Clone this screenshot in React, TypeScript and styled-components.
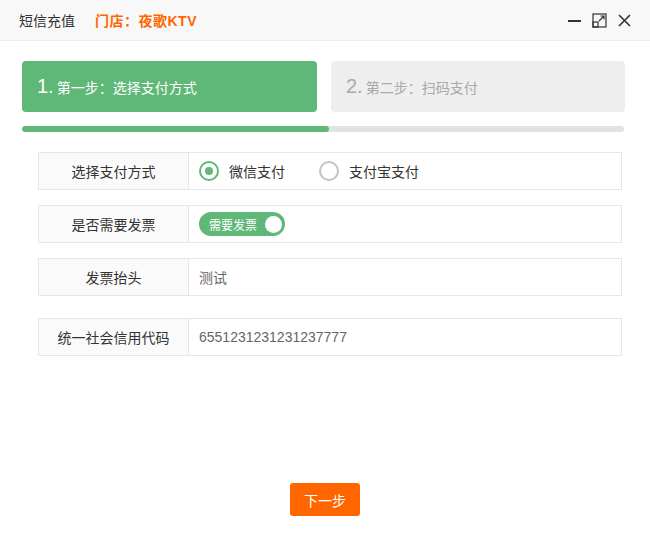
import React, { useState } from "react";
import styled, { createGlobalStyle } from "styled-components";

const GlobalStyle = createGlobalStyle`
  html, body {
    margin: 0;
    padding: 0;
    background: #fff;
    font-family: "Liberation Sans", "Noto Sans CJK SC", sans-serif;
  }
`;

const Window = styled.div`
  width: 650px;
  height: 546px;
  display: flex;
  flex-direction: column;
  background: #fff;
`;

const TitleBar = styled.div`
  height: 40px;
  border-bottom: 1px solid #eee;
  background: #f8f8f8;
  display: flex;
  align-items: center;
  padding: 0 18px 0 19px;
  font-size: 14px;
`;

const Title = styled.span`
  color: #333;
`;

const Shop = styled.span`
  color: #ff6600;
  font-weight: bold;
  margin-left: 20px;
  letter-spacing: 0.5px;
`;

const WinButtons = styled.div`
  margin-left: auto;
  display: flex;
  align-items: center;
  gap: 10px;
`;

const WinBtn = styled.span`
  width: 15px;
  height: 15px;
  display: flex;
  color: #333;
`;

const Body = styled.div`
  padding: 20px 25px 0 22px;
  display: flex;
  flex-direction: column;
  flex: 1;
`;

const Steps = styled.div`
  display: grid;
  grid-template-columns: 295px 294px;
  gap: 14px;
`;

const Step = styled.div<{ $active?: boolean }>`
  height: 51px;
  border-radius: 4px;
  background: ${p => (p.$active ? "#5fb878" : "#eeeeee")};
  color: ${p => (p.$active ? "#fff" : "#a9a9a9")};
  display: flex;
  align-items: center;
  padding-left: 15px;
  font-size: 14px;
`;

const StepNum = styled.span`
  font-size: 20px;
  margin-right: 3px;
`;

const Progress = styled.div`
  margin-top: 14px;
  height: 6px;
  background: #e2e2e2;
  border-radius: 3px;
  overflow: hidden;
  width: 602px;
`;

const ProgressFill = styled.div`
  height: 100%;
  background: #5fb878;
  border-radius: 3px;
`;

const Form = styled.div`
  margin: 20px 0 0 16px;
  width: 584px;
  display: flex;
  flex-direction: column;
`;

const Row = styled.div<{ $gap: number }>`
  display: flex;
  height: 38px;
  box-sizing: border-box;
  border: 1px solid #e6e6e6;
  margin-top: ${p => p.$gap}px;
`;

const Label = styled.div`
  width: 149px;
  flex: none;
  background: #fafafa;
  border-right: 1px solid #e6e6e6;
  display: flex;
  align-items: center;
  justify-content: center;
  font-size: 14px;
  color: #333;
`;

const Field = styled.div`
  flex: 1;
  display: flex;
  align-items: center;
  padding-left: 10px;
  font-size: 14px;
  color: #666;
`;

const RadioItem = styled.label`
  display: flex;
  align-items: center;
  color: #333;
  margin-right: 34px;
  cursor: pointer;
`;

const RadioCircle = styled.span<{ $on?: boolean }>`
  width: 16px;
  height: 16px;
  border-radius: 50%;
  border: 2px solid ${p => (p.$on ? "#5fb878" : "#c2c2c2")};
  display: flex;
  align-items: center;
  justify-content: center;
  margin-right: 10px;
  &::after {
    content: "";
    width: 8px;
    height: 8px;
    border-radius: 50%;
    background: ${p => (p.$on ? "#5fb878" : "transparent")};
  }
`;

const Switch = styled.span`
  height: 24px;
  width: 86px;
  box-sizing: border-box;
  border-radius: 12px;
  background: #5fb878;
  color: #fff;
  font-size: 12px;
  display: flex;
  align-items: center;
  padding: 0 3px 0 10px;
  justify-content: space-between;
`;

const Knob = styled.span`
  width: 17px;
  height: 17px;
  border-radius: 50%;
  background: #fff;
`;

const Footer = styled.div`
  margin-top: auto;
  padding-bottom: 30px;
  display: flex;
  justify-content: center;
`;

const NextBtn = styled.button`
  width: 70px;
  height: 33px;
  border: none;
  border-radius: 3px;
  background: #ff6600;
  color: #fff;
  font-size: 14px;
  font-family: inherit;
  margin-left: 3px;
`;

export default function App() {
  const [pay, setPay] = useState("wx");
  return (
    <Window>
      <GlobalStyle />
      <TitleBar>
        <Title>短信充值</Title>
        <Shop>门店：夜歌KTV</Shop>
        <WinButtons>
          <WinBtn>
            <svg width="15" height="15" viewBox="0 0 15 15">
              <path d="M1 8h13" stroke="#333" strokeWidth="2" />
            </svg>
          </WinBtn>
          <WinBtn>
            <svg width="15" height="15" viewBox="0 0 15 15" fill="none" stroke="#333" strokeWidth="1.2">
              <rect x="1" y="1" width="13" height="13" />
              <rect x="1" y="9" width="5" height="5" />
              <path d="M7 8l5-5M8.5 3H12v3.5" />
            </svg>
          </WinBtn>
          <WinBtn>
            <svg width="15" height="15" viewBox="0 0 15 15">
              <path d="M2 2l11 11M13 2L2 13" stroke="#333" strokeWidth="1.6" />
            </svg>
          </WinBtn>
        </WinButtons>
      </TitleBar>
      <Body>
        <Steps>
          <Step $active>
            <StepNum>1.</StepNum>第一步：选择支付方式
          </Step>
          <Step>
            <StepNum>2.</StepNum>第二步：扫码支付
          </Step>
        </Steps>
        <Progress>
          <ProgressFill style={{ width: "51%" }} />
        </Progress>
        <Form>
          <Row $gap={0}>
            <Label>选择支付方式</Label>
            <Field>
              <RadioItem onClick={() => setPay("wx")}>
                <RadioCircle $on={pay === "wx"} />
                微信支付
              </RadioItem>
              <RadioItem onClick={() => setPay("ali")}>
                <RadioCircle $on={pay === "ali"} />
                支付宝支付
              </RadioItem>
            </Field>
          </Row>
          <Row $gap={15}>
            <Label>是否需要发票</Label>
            <Field>
              <Switch>
                需要发票
                <Knob />
              </Switch>
            </Field>
          </Row>
          <Row $gap={15}>
            <Label>发票抬头</Label>
            <Field>测试</Field>
          </Row>
          <Row $gap={22}>
            <Label>统一社会信用代码</Label>
            <Field>6551231231231237777</Field>
          </Row>
        </Form>
        <Footer>
          <NextBtn>下一步</NextBtn>
        </Footer>
      </Body>
    </Window>
  );
}
